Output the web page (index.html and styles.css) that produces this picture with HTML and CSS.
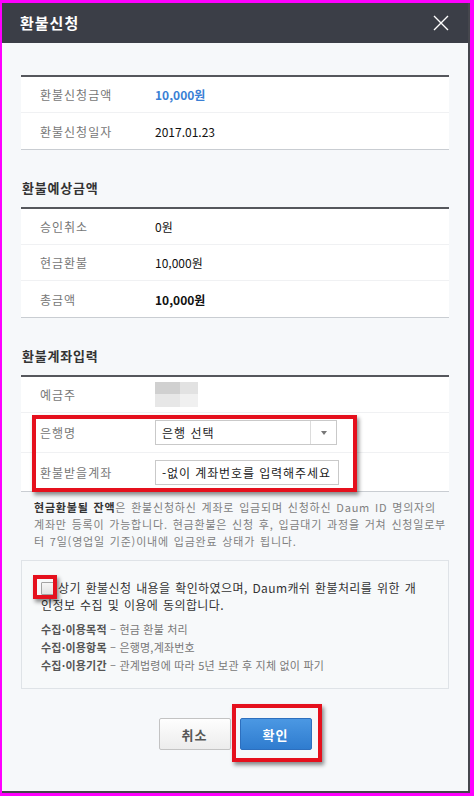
FILE: index.html
```html
<!DOCTYPE html>
<html lang="ko">
<head>
    <meta charset="UTF-8">
    <meta name="viewport" content="width=device-width, initial-scale=1.0">
    <title>환불신청</title>
    <link rel="stylesheet" href="styles.css">
</head>
<body>
    <div class="dialog">
        <div class="dialog-head">
            <h1>환불신청</h1>
            <button class="btn-close" type="button">
                <svg width="16" height="16" viewBox="0 0 16 16"><path d="M1 1L15 15M15 1L1 15" stroke="#fff" stroke-width="1.4" fill="none"/></svg>
            </button>
        </div>
        <div class="dialog-body">
            <div class="info-table">
                <div class="info-row">
                    <div class="label">환불신청금액</div>
                    <div class="value blue">10,000원</div>
                </div>
                <div class="info-row">
                    <div class="label">환불신청일자</div>
                    <div class="value">2017.01.23</div>
                </div>
            </div>

            <h2 class="sec-title">환불예상금액</h2>
            <div class="info-table">
                <div class="info-row">
                    <div class="label">승인취소</div>
                    <div class="value">0원</div>
                </div>
                <div class="info-row">
                    <div class="label">현금환불</div>
                    <div class="value">10,000원</div>
                </div>
                <div class="info-row">
                    <div class="label">총금액</div>
                    <div class="value strong">10,000원</div>
                </div>
            </div>

            <h2 class="sec-title">환불계좌입력</h2>
            <div class="info-table account">
                <div class="info-row">
                    <div class="label">예금주</div>
                    <div class="value">
                        <div class="name-blur"><span></span><span></span><span></span><span></span></div>
                    </div>
                </div>
                <div class="info-row">
                    <div class="label">은행명</div>
                    <div class="value">
                        <div class="select">
                            <span class="select-text">은행 선택</span>
                            <span class="select-arrow"></span>
                        </div>
                    </div>
                </div>
                <div class="info-row">
                    <div class="label">환불받을계좌</div>
                    <div class="value">
                        <input class="text-input" type="text" placeholder="-없이 계좌번호를 입력해주세요">
                    </div>
                </div>
            </div>

            <p class="notice"><strong>현금환불될 잔액</strong>은 환불신청하신 계좌로 입금되며 신청하신 Daum ID 명의자의<br>계좌만 등록이 가능합니다. 현금환불은 신청 후, 입금대기 과정을 거쳐 신청일로부<br>터 7일(영업일 기준)이내에 입금완료 상태가 됩니다.</p>

            <div class="agree-box">
                <p class="agree-check"><input type="checkbox">상기 환불신청 내용을 확인하였으며, Daum캐쉬 환불처리를 위한 개<br>인정보 수집 및 이용에 동의합니다.</p>
                <ul class="agree-list">
                    <li><strong>수집·이용목적</strong> – 현금 환불 처리</li>
                    <li><strong>수집·이용항목</strong> – 은행명,계좌번호</li>
                    <li><strong>수집·이용기간</strong> – 관계법령에 따라 5년 보관 후 지체 없이 파기</li>
                </ul>
            </div>

            <div class="btn-area">
                <button class="btn btn-cancel" type="button">취소</button>
                <button class="btn btn-ok" type="button">확인</button>
            </div>
        </div>

        <!-- 강조 표시 -->
        <div class="mark mark-form"></div>
        <div class="mark mark-check"></div>
        <div class="mark mark-btn"></div>
    </div>
</body>
</html>
```

FILE: styles.css
```css
* {
    box-sizing: border-box;
}
body {
    margin: 0;
    background: #f0f;
    font-family: "Noto Sans CJK KR", "Noto Sans", sans-serif;
}
.dialog {
    position: relative;
    width: 468px;
    height: 790px;
    margin: 3px 0 0 2px;
    background: #f6f8fa;
    border-right: 2px solid #45474d;
    border-bottom: 2px solid #45474d;
}
.dialog-head {
    display: flex;
    align-items: center;
    justify-content: space-between;
    height: 40px;
    padding: 0 19px 0 18px;
    background: #3b3e47;
}
.dialog-head h1 {
    margin: 0;
    font-size: 15px;
    line-height: 20px;
    letter-spacing: 1px;
    font-weight: bold;
    color: #fff;
}
.btn-close {
    display: block;
    width: 16px;
    height: 16px;
    padding: 0;
    border: 0;
    background: none;
}
.btn-close svg {
    display: block;
}
.dialog-body {
    padding: 32px 19px 0;
}

/* 정보 테이블 */
.info-table {
    background: #fff;
    border-top: 2px solid #55575c;
    border-bottom: 1px solid #c9cdd2;
}
.info-row {
    display: flex;
    align-items: center;
    height: 36px;
    border-bottom: 1px solid #f0f1f3;
}
.info-row:last-child {
    border-bottom: 0;
}
.info-row .label {
    width: 134px;
    padding-left: 19px;
    font-size: 12px;
    letter-spacing: 1px;
    color: #777;
}
.info-row .value {
    font-size: 12px;
    color: #111;
}
.info-row .blue {
    font-weight: bold;
    color: #3a7fd5;
}
.info-row .strong {
    font-weight: bold;
    color: #111;
}
.account .info-row:nth-child(2) {
    height: 40px;
}
.account .info-row:nth-child(3) {
    height: 38px;
}
.sec-title {
    margin: 28px 0 9px 1px;
    font-size: 13px;
    line-height: 20px;
    letter-spacing: .8px;
    font-weight: bold;
    color: #333;
}

/* 예금주 (가림) */
.name-blur {
    display: grid;
    grid-template-columns: 25px 18px;
    grid-template-rows: 12px 13px;
}
.name-blur span:nth-child(1) { background: #d0d0d0; }
.name-blur span:nth-child(2) { background: #e2e2e2; }
.name-blur span:nth-child(3) { background: #e7e7e7; }
.name-blur span:nth-child(4) { background: #f0f0f0; }

.select {
    display: flex;
    width: 182px;
    height: 25px;
    border: 1px solid #c9c9c9;
    background: #fff;
}
.select-text {
    flex: 1;
    padding-left: 6px;
    font-size: 12px;
    line-height: 23px;
    letter-spacing: 1px;
    color: #222;
}
.select-arrow {
    display: flex;
    align-items: center;
    justify-content: center;
    width: 26px;
    border-left: 1px solid #dcdcdc;
}
.select-arrow::after {
    content: "";
    border-left: 3.5px solid transparent;
    border-right: 3.5px solid transparent;
    border-top: 4px solid #777;
}
.text-input {
    display: block;
    width: 184px;
    height: 25px;
    padding: 0 0 0 6px;
    border: 1px solid #c9c9c9;
    font-family: inherit;
    font-size: 12px;
    letter-spacing: .9px;
    color: #222;
    outline: none;
}
.text-input::placeholder {
    color: #222;
}

.notice {
    margin: 7px 0 0;
    padding: 0 0 0 13px;
    font-size: 11px;
    line-height: 17px;
    letter-spacing: .8px;
    word-spacing: 1px;
    white-space: nowrap;
    color: #808080;
}
.notice strong {
    color: #333;
}

/* 동의 */
.agree-box {
    margin-top: 10px;
    padding: 18px 10px 14px 19px;
    border: 1px solid #dfe3e7;
    background: #f7f9fa;
}
.agree-check {
    margin: 0;
    font-size: 12px;
    line-height: 17px;
    letter-spacing: .4px;
    word-spacing: 1px;
    white-space: nowrap;
    color: #333;
}
.agree-check input {
    -webkit-appearance: none;
    appearance: none;
    width: 13px;
    height: 13px;
    margin: 0 4px 0 0;
    vertical-align: -2px;
    border: 1px solid #a3a3a3;
    border-radius: 1px;
    background: linear-gradient(#f6f6f6, #e2e2e2);
}
.agree-list {
    margin: 7px 0 0;
    padding: 0;
    list-style: none;
}
.agree-list li {
    font-size: 11px;
    line-height: 18px;
    letter-spacing: .2px;
    color: #777;
}
.agree-list strong {
    color: #555;
}

.btn-area {
    display: flex;
    justify-content: center;
    gap: 9px;
    margin-top: 29px;
}
.btn {
    width: 72px;
    height: 32px;
    padding: 0;
    border-radius: 2px;
    font-family: inherit;
    font-size: 13px;
    letter-spacing: 1px;
    font-weight: bold;
}
.btn-cancel {
    border: 1px solid #c3c3c3;
    background: linear-gradient(#fefefe, #ececec);
    color: #555;
}
.btn-ok {
    border: 1px solid #2d6fbe;
    background: linear-gradient(#4b98e3, #2f7ccf);
    color: #fff;
}

/* 빨간 강조 박스 */
.mark {
    position: absolute;
    border: 4px solid #e5101d;
    box-shadow: 2px 3px 4px rgba(0, 0, 0, .45);
}
.mark-form {
    left: 30px;
    top: 412px;
    width: 325px;
    height: 77px;
}
.mark-check {
    left: 31px;
    top: 572px;
    width: 24px;
    height: 24px;
}
.mark-btn {
    left: 230px;
    top: 701px;
    width: 90px;
    height: 58px;
}
```
